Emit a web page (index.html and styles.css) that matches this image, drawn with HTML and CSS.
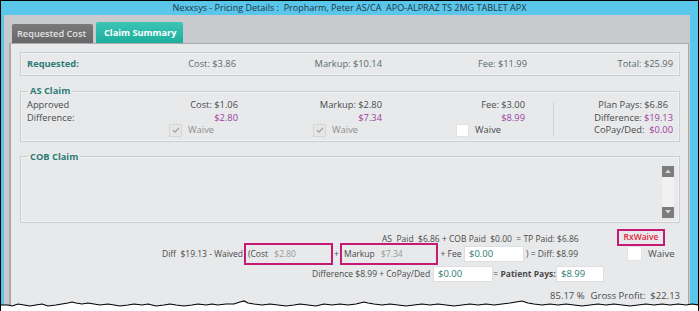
FILE: index.html
```html
<!DOCTYPE html>
<html lang="en">
<head>
    <meta charset="UTF-8">
    <title>Nexxsys - Pricing Details</title>
    <link rel="stylesheet" href="styles.css">
</head>
<body>

    <div class="window">
        <div class="titlebar">Nexxsys - Pricing Details :&nbsp; Propharm, Peter AS/CA&nbsp; APO-ALPRAZ TS 2MG TABLET APX</div>

        <div class="client">
            <!-- Tabs -->
            <div class="tabs">
                <div class="tab">Requested Cost</div>
                <div class="tab active">Claim Summary</div>
            </div>

            <div class="panel">
                <!-- Requested totals -->
                <div class="requested">
                    <span class="req-label">Requested:</span>
                    <span class="num">Cost: $3.86</span>
                    <span class="num">Markup: $10.14</span>
                    <span class="num">Fee: $11.99</span>
                    <span class="num">Total: $25.99</span>
                </div>

                <!-- AS Claim -->
                <fieldset class="group as-claim">
                    <legend>AS Claim</legend>
                    <div class="claim-grid">
                        <span class="lbl">Approved</span>
                        <span class="num">Cost: $1.06</span>
                        <span class="num">Markup: $2.80</span>
                        <span class="num">Fee: $3.00</span>
                        <span class="sep"></span>
                        <span class="num pad-r">Plan Pays: $6.86</span>

                        <span class="lbl">Difference:</span>
                        <span class="num purple">$2.80</span>
                        <span class="num purple">$7.34</span>
                        <span class="num purple">$8.99</span>
                        <span class="num">Difference: <span class="purple">$19.13</span></span>

                        <span></span>
                        <span class="waive"><span class="check checked"><svg width="10" height="10" viewBox="0 0 10 10"><path d="M2 5.2 L4 7.2 L8 2.8" fill="none" stroke="#9a9a9a" stroke-width="1.1"/></svg></span>Waive</span>
                        <span class="waive"><span class="check checked"><svg width="10" height="10" viewBox="0 0 10 10"><path d="M2 5.2 L4 7.2 L8 2.8" fill="none" stroke="#9a9a9a" stroke-width="1.1"/></svg></span>Waive</span>
                        <span class="waive dark"><span class="check"></span>Waive</span>
                        <span class="num">CoPay/Ded:&nbsp; <span class="purple">$0.00</span></span>
                    </div>
                </fieldset>

                <!-- COB Claim -->
                <fieldset class="group cob-claim">
                    <legend>COB Claim</legend>
                    <div class="scrollbar">
                        <span class="sb-btn"><svg width="6" height="4" viewBox="0 0 6 4"><path d="M0 4 L3 0.5 L6 4 Z" fill="#d6d6d6"/></svg></span>
                        <span class="sb-btn"><svg width="6" height="4" viewBox="0 0 6 4"><path d="M0 0 L3 3.5 L6 0 Z" fill="#d6d6d6"/></svg></span>
                    </div>
                </fieldset>

                <!-- Totals -->
                <div class="totals">
                    <div class="row row-paid">
                        <span class="seg paid-text">AS&nbsp; Paid&nbsp; $6.86 + COB Paid&nbsp; $0.00&nbsp; = TP Paid: $6.86</span>
                        <span class="rxwaive">RxWaive</span>
                    </div>
                    <div class="row row-diff">
                        <span class="seg diff-text">Diff&nbsp; $19.13 - Waived</span>
                        <span class="hl hl-cost">(Cost <span class="ghost">$2.80</span></span>
                        <span class="seg plus">+</span>
                        <span class="hl hl-markup">Markup <span class="ghost">$7.34</span></span>
                        <span class="seg fee-text">+ Fee</span>
                        <span class="field f-fee">$0.00</span>
                        <span class="seg diff-end">) = Diff: $8.99</span>
                        <span class="check big"></span>
                        <span class="waive-lbl">Waive</span>
                    </div>
                    <div class="row row-pay">
                        <span class="seg copay-text">Difference $8.99 + CoPay/Ded</span>
                        <span class="field f-copay">$0.00</span>
                        <span class="seg pays-text">= <b>Patient Pays:</b></span>
                        <span class="field f-pays">$8.99</span>
                    </div>
                    <div class="row row-profit">
                        <span>85.17 %</span>
                        <span>Gross Profit:&nbsp; $22.13</span>
                    </div>
                </div>
            </div>
        </div>

        <!-- torn paper edge of the screenshot -->
        <svg class="torn" width="699" height="13" viewBox="0 0 699 13">
            <polygon fill="#fff" points="0,7 8,7 12,8 18,6 24,7 30,8 36,7 42,6 48,8 56,7 62,6 68,5 72,4 76,5 82,6 88,5 94,6 100,7 108,6 114,7 120,8 128,7 134,6 142,7 148,6 156,8 164,7 170,6 176,7 184,8 192,7 198,6 206,7 212,6 218,7 226,6 234,6 240,4 244,3 248,5 254,6 262,7 270,6 278,7 286,8 294,7 300,6 308,7 316,8 324,6 332,7 340,6 348,7 356,6 364,4 368,5 374,6 382,7 390,6 398,7 406,8 414,7 422,6 430,7 438,6 446,7 454,8 462,7 470,6 478,7 486,6 494,7 502,6 510,5 516,4 522,3 528,5 534,6 542,7 550,6 558,7 566,6 574,7 582,8 590,7 598,6 606,7 614,6 622,7 630,8 638,7 646,6 654,7 662,6 670,7 678,6 686,7 692,6 699,7 699,13 0,13"/>
            <polyline fill="none" stroke="#000" stroke-width="1.2" points="0,7 8,7 12,8 18,6 24,7 30,8 36,7 42,6 48,8 56,7 62,6 68,5 72,4 76,5 82,6 88,5 94,6 100,7 108,6 114,7 120,8 128,7 134,6 142,7 148,6 156,8 164,7 170,6 176,7 184,8 192,7 198,6 206,7 212,6 218,7 226,6 234,6 240,4 244,3 248,5 254,6 262,7 270,6 278,7 286,8 294,7 300,6 308,7 316,8 324,6 332,7 340,6 348,7 356,6 364,4 368,5 374,6 382,7 390,6 398,7 406,8 414,7 422,6 430,7 438,6 446,7 454,8 462,7 470,6 478,7 486,6 494,7 502,6 510,5 516,4 522,3 528,5 534,6 542,7 550,6 558,7 566,6 574,7 582,8 590,7 598,6 606,7 614,6 622,7 630,8 638,7 646,6 654,7 662,6 670,7 678,6 686,7 692,6 699,7"/>
        </svg>
    </div>

</body>
</html>
```

FILE: styles.css
```css
/* Window frame */
body {
    margin: 0;
    font-family: "Open Sans", sans-serif;
    color: #4b4b4b;
    background: #fff;
}

.window {
    position: relative;
    width: 699px;
    height: 311px;
    box-sizing: border-box;
    border: 1px solid #000;
    border-bottom: 0;
    background: #5ac6ea;
    display: flex;
    flex-direction: column;
    overflow: hidden;
}

.titlebar {
    height: 14px;
    line-height: 14px;
    text-align: center;
    font-size: 9.05px;
    color: #1f3545;
    white-space: nowrap;
}

.client {
    flex: 1;
    margin: 0 8px 0 3px;
    padding: 7px 1px 0 5px;
    background: #c9cacd;
    display: flex;
    flex-direction: column;
}

/* Tabs */
.tabs {
    display: flex;
    align-items: flex-end;
    gap: 3px;
    margin-left: 3px;
}

.tab {
    height: 19px;
    line-height: 19px;
    padding: 0 5px;
    width: 71px;
    font-size: 9.2px;
    font-weight: 600;
    color: #e2e2e2;
    background: linear-gradient(#7a7a7a, #676767);
    border-radius: 2px 2px 0 0;
    white-space: nowrap;
}

.tab.active {
    height: 21px;
    line-height: 21px;
    width: 74px;
    padding: 0 5px 0 8px;
    font-weight: 700;
    color: #fff;
    background: linear-gradient(#3cc4b5, #1cae9e);
}

/* Main panel */
.panel {
    flex: 1;
    background: #e8e9ea;
    border: 1px solid #a9aaad;
    border-left-width: 2px;
    border-bottom: 0;
    padding: 8px 8px 0 9px;
    font-size: 9.3px;
}

.num {
    text-align: right;
    white-space: nowrap;
}

.purple {
    color: #9b3f9f;
}

.requested {
    display: grid;
    grid-template-columns: 111px 98px 146px 145px 146px;
    height: 22px;
    line-height: 22px;
    padding: 0 6px;
    border: 1px solid #cdced0;
    box-shadow: inset 0 0 0 1px #f2f2f2;
    color: #5a6a6a;
}

.req-label {
    font-weight: 700;
    color: #2d7c77;
}

/* Group boxes */
.group {
    margin: 9px 0 0;
    padding: 0 6px;
    min-width: 0;
    border: 1px solid #cdced0;
    box-shadow: inset 0 0 0 1px #f2f2f2;
}

.group legend {
    padding: 0 2px;
    margin-left: 1px;
    font-weight: 700;
    line-height: 12px;
    color: #2d7c77;
}

.as-claim {
    padding-top: 2px;
    padding-bottom: 4px;
}

.claim-grid {
    display: grid;
    grid-template-columns: 111px 100px 144px 143px 56px 92px;
    grid-auto-rows: 12.5px;
    line-height: 12.5px;
    color: #4a4a4a;
}

.sep {
    grid-row: 1 / 4;
    grid-column: 5;
    justify-self: center;
    width: 1px;
    margin: 3px 0 1px;
    background: #d2d3d5;
}

.pad-r {
    padding-right: 5px;
}

.waive {
    justify-self: end;
    margin-right: 24px;
    display: flex;
    align-items: center;
    gap: 6px;
    color: #8e8e8e;
}

.waive.dark {
    color: #4a4a4a;
}

.check {
    display: inline-flex;
    align-items: center;
    justify-content: center;
    width: 11px;
    height: 11px;
    background: #fff;
    border: 1px solid #e2e2e2;
}

.check.checked {
    background: #e6e6e6;
    border-color: #d6d6d6;
}

.cob-claim {
    display: flex;
    justify-content: flex-end;
    padding-top: 3px;
    padding-bottom: 4px;
    padding-right: 5px;
}

.scrollbar {
    width: 12px;
    height: 52px;
    background: #f1f1f1;
    display: flex;
    flex-direction: column;
    justify-content: space-between;
}

.sb-btn {
    height: 11px;
    display: flex;
    align-items: center;
    justify-content: center;
    background: #7c7c7c;
}

/* Totals */
.totals {
    font-size: 8.5px;
    color: #4a4a4a;
}

.row {
    display: flex;
    align-items: center;
    white-space: nowrap;
}

.seg {
    flex: none;
}

.row-paid {
    height: 14px;
    margin-top: 9px;
    padding-left: 362px;
}

.paid-text {
    width: 196px;
    text-align: right;
}

.rxwaive {
    box-sizing: border-box;
    align-self: flex-start;
    width: 48px;
    height: 17px;
    line-height: 12px;
    margin: -3px 0 0 39px;
    text-align: center;
    border: 2.5px solid #c41a73;
    color: #e3263c;
    font-weight: 600;
}

.row-diff {
    height: 16px;
    padding-left: 142px;
}

.diff-text {
    width: 81px;
    text-align: right;
}

.hl {
    flex: none;
    box-sizing: border-box;
    height: 22px;
    line-height: 17px;
    padding: 0 2px;
    border: 2.5px solid #c41a73;
}

.hl-cost {
    width: 89px;
    margin-left: 1px;
}

.hl-markup {
    width: 98px;
}

.ghost {
    margin-left: 4px;
    color: #9a9a9a;
}

.plus {
    width: 7px;
    text-align: center;
}

.fee-text {
    width: 26px;
    text-align: center;
}

.field {
    flex: none;
    box-sizing: border-box;
    height: 16px;
    line-height: 14px;
    padding: 0 4px;
    background: #fff;
    border: 1px solid #dedede;
    color: #2c7a71;
    font-size: 9.5px;
}

.f-fee {
    width: 60px;
}

.diff-end {
    width: 54px;
    text-align: right;
}

.check.big {
    flex: none;
    width: 13px;
    height: 13px;
    margin-left: 49px;
}

.waive-lbl {
    margin-left: 6px;
    font-size: 9.5px;
}

.row-pay {
    height: 16px;
    margin-top: 4px;
    padding-left: 292px;
}

.copay-text {
    width: 118px;
    text-align: right;
}

.f-copay {
    width: 60px;
    margin-left: 3px;
}

.pays-text {
    width: 63px;
    text-align: center;
}

.f-pays {
    width: 48px;
}

.row-profit {
    height: 14px;
    margin-top: 7px;
    justify-content: flex-end;
    gap: 6px;
    font-size: 9.5px;
}

.torn {
    position: absolute;
    left: -1px;
    bottom: 0;
}
```
